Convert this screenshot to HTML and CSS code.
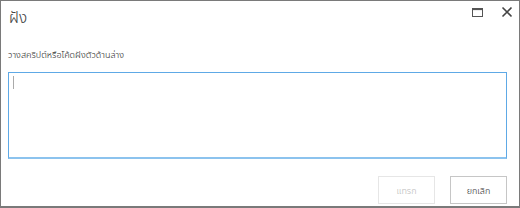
FILE: index.html
```html
<!DOCTYPE html>
<html lang="th">
<head>
<meta charset="utf-8">
<link rel="stylesheet" href="styles.css">
</head>
<body>
<div class="dialog">
  <div class="titlebar">
    <h1 class="title">ฝัง</h1>
    <div class="controls">
      <svg class="icon" width="12" height="12" viewBox="0 0 12 12"><rect x="1.5" y="2.5" width="10" height="8" fill="none" stroke="#555" stroke-width="1"/><rect x="1.5" y="2.5" width="10" height="1.6" fill="#555"/></svg>
      <svg class="icon" width="12" height="12" viewBox="0 0 12 12"><path d="M1.5 1.5 L10.5 10.5 M10.5 1.5 L1.5 10.5" stroke="#444" stroke-width="1.6"/></svg>
    </div>
  </div>
  <div class="body">
    <label class="label">วางสคริปต์หรือโค้ดฝังตัวด้านล่าง</label>
    <div class="textarea"><span class="caret"></span></div>
  </div>
  <div class="footer">
    <button class="btn disabled">แทรก</button>
    <button class="btn">ยกเลิก</button>
  </div>
</div>
</body>
</html>
```
FILE: styles.css
```css
html, body { margin: 0; padding: 0; background: #fff; }
body { font-family: "Noto Sans Thai UI", "Noto Sans Thai", "Noto Sans", sans-serif; width: 520px; height: 208px; }
.dialog {
  box-sizing: border-box;
  width: 520px; height: 208px;
  border: 1px solid #7a7a7a;
  border-bottom-width: 2px;
  display: flex; flex-direction: column;
}
.titlebar { display: flex; justify-content: space-between; align-items: flex-start; padding: 4px 6px 0 8px; height: 38px; box-sizing: border-box; }
.title { margin: 0; font-size: 17px; font-weight: 300; font-stretch: condensed; color: #444; line-height: 24px; }
.controls { display: flex; gap: 18px; padding-top: 1px; }
.icon { display: block; }
.body { padding: 0 12px 0 7px; display: flex; flex-direction: column; }
.label { font-size: 10px; font-weight: 300; font-stretch: condensed; color: #333; line-height: 16px; margin-top: 7px; height: 17px; }
.textarea { height: 84px; border: 1px solid #5ea9e6; border-bottom: 2px solid #8cc3ee; margin-top: 9px; position: relative; }
.caret { position: absolute; left: 4px; top: 3px; width: 1px; height: 13px; background: #aaa; }
.footer { display: flex; justify-content: flex-end; gap: 15px; padding: 17px 12px 0 0; }
.btn { box-sizing: border-box; width: 57px; height: 28px; border: 1px solid #c6c6c6; background: #fff; font-family: inherit; font-size: 10px; font-weight: 300; font-stretch: condensed; color: #333; padding: 0; }
.btn.disabled { border-color: #e6e6e6; color: #bbb; }
```
